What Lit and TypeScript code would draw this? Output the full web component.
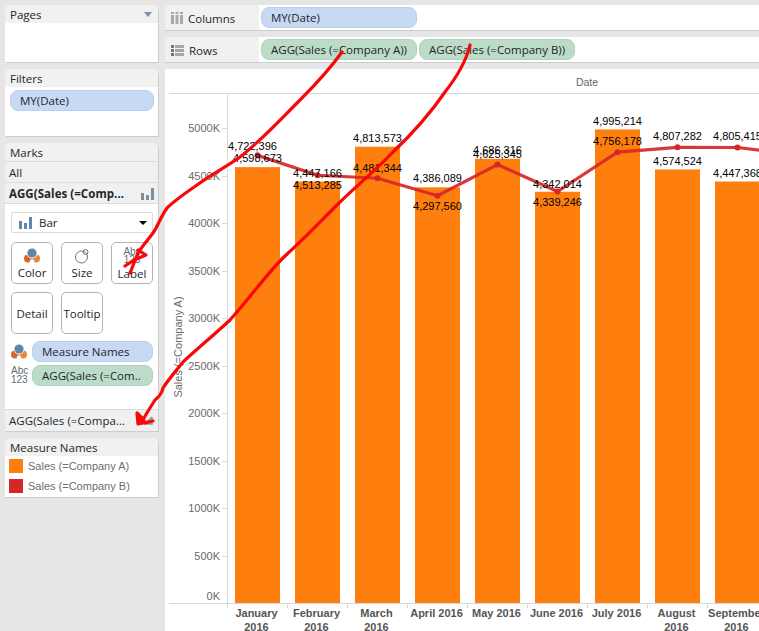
import { LitElement, html, css, svg } from "lit";
import { customElement } from "lit/decorators.js";

const BASE = 604;
const y = (v: number) => BASE - v * 0.000095;
const months = [
  { l: ["January", "2016"], bar: 4598673, line: 4722396, bb: 162, lb: 149.5, dx: -5 },
  { l: ["February", "2016"], bar: 4447166, line: 4513285, bb: 177, lb: 189, dx: 0 },
  { l: ["March", "2016"], bar: 4813573, line: 4481344, bb: 142, lb: 171.5, dx: 0 },
  { l: ["April 2016"], bar: 4386089, line: 4297560, bb: 182, lb: 209.5, dx: 0 },
  { l: ["May 2016"], bar: 4686316, line: 4625345, bb: 153.5, lb: 158, dx: 0 },
  { l: ["June 2016"], bar: 4339246, line: 4342014, bb: 206, lb: 187.5, dx: 0 },
  { l: ["July 2016"], bar: 4995214, line: 4756178, bb: 125, lb: 145, dx: 0 },
  { l: ["August", "2016"], bar: 4574524, line: 4807282, bb: 165, lb: 140, dx: 0 },
  { l: ["September", "2016"], bar: 4447368, line: 4805415, bb: 177, lb: 140, dx: 0 },
];
const fmt = (n: number) => n.toLocaleString("en-US");
const cx = (i: number) => 257.5 + i * 60;
const ticks = [5000, 4500, 4000, 3500, 3000, 2500, 2000, 1500, 1000, 500, 0];

const colorIcon = svg`<svg class="ic" width="16" height="16" viewBox="0 0 16 16"><circle cx="4" cy="10.5" r="4" fill="#d9642a"/><circle cx="12" cy="10.5" r="4" fill="#e8873a"/><circle cx="8" cy="13.5" r="2.2" fill="#fff"/><circle cx="8" cy="5" r="5.4" fill="#fff"/><circle cx="8" cy="5" r="4.6" fill="#5d88ab"/></svg>`;

@customElement("app-root")
export class AppRoot extends LitElement {
  static styles = css`
    :host { display: block; width: 759px; height: 631px; position: relative; overflow: hidden; background: #e6e6e6; font-family: "Open Sans", "Noto Sans", sans-serif; font-size: 11.5px; color: #22262b; }
    .root { display: grid; grid-template-columns: 153px 1fr; column-gap: 7px; padding: 5px 0 0 5px; height: 626px; }
    .left { display: flex; flex-direction: column; gap: 7px; }
    .right { display: flex; flex-direction: column; gap: 7px; min-width: 0; }
    .card { background: #fff; border-radius: 6px 6px 0 0; box-shadow: 1px 1px 0 #cdcdcd; display: flex; flex-direction: column; overflow: hidden; }
    .hd { height: 18px; box-sizing: border-box; padding: 1px 5px 0; background: #f1f1f0; display: flex; align-items: center; justify-content: space-between; flex: none; line-height: 17px; }
    .tri { width: 0; height: 0; border-left: 4px solid transparent; border-right: 4px solid transparent; border-top: 5px solid #7d93ad; margin-right: 1px; }
    .pages { height: 57px; }
    .filters { height: 67px; }
    .pill { height: 21px; box-sizing: border-box; border-radius: 8px; padding-left: 9px; display: flex; align-items: center; line-height: 18px; white-space: nowrap; overflow: hidden; }
    .blue { background: #c7d9f3; border: 1px solid #b9cfee; }
    .green { background: #bcdcc9; border: 1px solid #afd3bd; }
    .fpill { margin: 3px 4px 0 5px; }
    .marks { height: 288px; }
    .row { height: 20px; background: #f0f0f1; border-top: 1px solid #dcdcdc; display: flex; align-items: center; justify-content: space-between; padding: 0 3px 0 4px; flex: none; white-space: nowrap; }
    .row.b { font-weight: 700; letter-spacing: 0.05px; }
    .body { flex: 1; padding: 8px 5px 0 6px; display: flex; flex-direction: column; border-top: 1px solid #dcdcdc; }
    .sel { height: 21px; box-sizing: border-box; border: 1px solid #dcdcdc; border-radius: 2px; display: flex; align-items: center; padding: 0 5px 0 7px; gap: 7px; }
    .sel .caret { margin-left: auto; width: 0; height: 0; border-left: 4px solid transparent; border-right: 4px solid transparent; border-top: 4px solid #000; }
    .btns { display: grid; grid-template-columns: repeat(3, 42px); grid-auto-rows: 42px; gap: 8px; margin-top: 9px; }
    .btn { box-sizing: border-box; border: 1px solid #b4b4b4; border-radius: 5px; display: flex; flex-direction: column; align-items: center; justify-content: center; line-height: 15px; }
    .btn .ic { margin-top: 2px; margin-bottom: 1px; }
    .abc { font-family: "Liberation Sans", sans-serif; font-size: 10px; line-height: 8.5px; color: #5f6b78; text-align: center; height: 17px; margin-top: 2px; margin-bottom: 1px; }
    .enc { display: grid; grid-template-columns: 16px 1fr; column-gap: 5px; row-gap: 3px; margin-top: 7px; align-items: center; }
    .enc .abc { margin: 0; }
    .foot { height: 21px; background: #f0f0f1; border-top: 1px solid #dcdcdc; display: flex; align-items: center; justify-content: space-between; padding: 0 5px 0 4px; flex: none; white-space: nowrap; letter-spacing: 0.05px; }
    .legend { height: 59px; }
    .li { display: flex; align-items: center; gap: 5px; height: 20px; padding-left: 4px; font-family: "Liberation Sans", sans-serif; font-size: 11px; color: #6e6e6e; }
    .li:first-of-type { margin-top: -1px; }
    .sw { width: 14px; height: 14px; flex: none; }
    .shelf { height: 25px; background: #fff; border-radius: 6px 0 0 0; box-shadow: 0 1px 0 #cdcdcd; display: flex; align-items: center; overflow: hidden; flex: none; }
    .shelf .name { width: 94px; height: 100%; background: #f1f1f0; display: flex; align-items: center; gap: 5px; padding: 1px 0 0 6px; box-sizing: border-box; flex: none; margin-right: 2px; }
    .shelf .pill { width: 156px; flex: none; margin-right: 2px; }
    .chart { flex: 1; background: #fff; margin-bottom: -5px; overflow: hidden; }
    .chart svg { display: block; }
    text { font-family: "Liberation Sans", sans-serif; font-size: 11px; }
    .tick { fill: #6a6a6a; text-anchor: end; }
    .val { fill: #000; text-anchor: middle; }
    .xl { fill: #555; font-weight: 700; text-anchor: middle; }
    .ttl { fill: #666; text-anchor: middle; font-size: 10.5px; }
    .overlay { position: absolute; left: 0; top: 0; pointer-events: none; }
  `;

  private chart() {
    const ox = 165, oy = 69;
    const pts = months.map((m, i) => `${cx(i)},${y(m.line)}`).join(" ");
    return svg`<svg width="594" height="562" viewBox="${ox} ${oy} 594 562">
      <line x1="169" x2="759" y1="93.5" y2="93.5" stroke="#d9d9d9"/>
      <line x1="169" x2="759" y1="603.5" y2="603.5" stroke="#d9d9d9"/>
      <line x1="227.5" x2="227.5" y1="93" y2="608" stroke="#d9d9d9"/>
      ${months.map((_, i) => svg`<line x1="${227.5 + (i + 1) * 60}" x2="${227.5 + (i + 1) * 60}" y1="604" y2="608" stroke="#d9d9d9"/>`)}
      ${ticks.map((t) => {
        const ty = Math.round(BASE - t * 0.095) - 0.5;
        return svg`<line x1="222" x2="227" y1="${ty}" y2="${ty}" stroke="#d9d9d9"/><text class="tick" x="220" y="${t === 0 ? ty - 4 : ty + 3}">${t}K</text>`;
      })}
      <text class="ttl" x="587" y="86">Date</text>
      <text class="tick" style="text-anchor:middle" transform="translate(182 347) rotate(-90)">Sales (=Company A)</text>
      ${months.map((m, i) => svg`<rect x="${cx(i) - 22.5}" y="${y(m.bar)}" width="45" height="${BASE - y(m.bar) - 1}" fill="#ff7f0e"/>`)}
      <polyline points="${pts} 797,155" fill="none" stroke="#d62728" stroke-opacity="0.92" stroke-width="3.2" stroke-linejoin="round"/>
      ${months.map((m, i) => svg`<circle cx="${cx(i)}" cy="${y(m.line)}" r="3" fill="#d62728"/>`)}
      ${months.map((m, i) => svg`<text class="val" x="${cx(i)}" y="${m.bb}">${fmt(m.bar)}</text><text class="val" x="${cx(i) + m.dx}" y="${m.lb}">${fmt(m.line)}</text>`)}
      ${months.map((m, i) => m.l.map((s, j) => svg`<text class="xl" x="${cx(i) - 1}" y="${617 + j * 14}">${s}</text>`))}
    </svg>`;
  }

  render() {
    return html`
      <div class="root">
        <div class="left">
          <div class="card pages"><div class="hd">Pages<span class="tri"></span></div></div>
          <div class="card filters"><div class="hd">Filters</div><div class="pill blue fpill">MY(Date)</div></div>
          <div class="card marks">
            <div class="hd">Marks</div>
            <div class="row">All</div>
            <div class="row b">AGG(Sales (=Comp...
              <svg width="14" height="13" viewBox="0 0 14 13" fill="#7d8e9e"><rect x="0" y="6" width="3" height="7"/><rect x="5" y="8" width="3" height="5"/><rect x="10" y="1" width="3" height="12"/></svg>
            </div>
            <div class="body">
              <div class="sel">
                <svg width="13" height="13" viewBox="0 0 13 13" fill="#5d88ab"><rect x="0" y="5" width="3" height="8"/><rect x="5" y="7" width="3" height="6"/><rect x="10" y="1" width="3" height="12"/></svg>
                Bar<span class="caret"></span>
              </div>
              <div class="btns">
                <div class="btn">${colorIcon}Color</div>
                <div class="btn"><svg class="ic" width="16" height="16" viewBox="0 0 16 16" fill="none" stroke="#6b7680"><circle cx="7.5" cy="9" r="6"/><circle cx="11.5" cy="4" r="2.5"/></svg>Size</div>
                <div class="btn"><div class="abc">Abc<br/>123</div>Label</div>
                <div class="btn">Detail</div>
                <div class="btn">Tooltip</div>
              </div>
              <div class="enc">
                ${colorIcon}<div class="pill blue">Measure Names</div>
                <div class="abc">Abc<br/>123</div><div class="pill green">AGG(Sales (=Com..</div>
              </div>
            </div>
            <div class="foot">AGG(Sales (=Compa...
              <svg width="9" height="9" viewBox="0 0 9 9" fill="none" stroke="#8596a8" stroke-width="1.5"><path d="M8 1 L1 8 M8 1 L8 8 L1 8"/></svg>
            </div>
          </div>
          <div class="card legend">
            <div class="hd">Measure Names</div>
            <div class="li"><span class="sw" style="background:#ff7f0e"></span>Sales (=Company A)</div>
            <div class="li"><span class="sw" style="background:#d62728"></span>Sales (=Company B)</div>
          </div>
        </div>
        <div class="right">
          <div class="shelf">
            <div class="name">
              <svg width="12" height="12" viewBox="0 0 12 12" fill="#a3a9b0"><rect x="0" y="0" width="3" height="2"/><rect x="4.5" y="0" width="3" height="2"/><rect x="9" y="0" width="3" height="2"/><rect x="0" y="3" width="3" height="9"/><rect x="4.5" y="3" width="3" height="9"/><rect x="9" y="3" width="3" height="9"/></svg>
              Columns
            </div>
            <div class="pill blue">MY(Date)</div>
          </div>
          <div class="shelf">
            <div class="name">
              <svg width="13" height="11" viewBox="0 0 13 11" fill="#a3a9b0"><rect x="0" y="0" width="3" height="3" fill="#6b7680"/><rect x="0" y="4" width="3" height="3" fill="#6b7680"/><rect x="0" y="8" width="3" height="3" fill="#6b7680"/><rect x="4" y="0" width="9" height="3"/><rect x="4" y="4" width="9" height="3"/><rect x="4" y="8" width="9" height="3"/></svg>
              Rows
            </div>
            <div class="pill green">AGG(Sales (=Company A))</div>
            <div class="pill green">AGG(Sales (=Company B))</div>
          </div>
          <div class="chart">${this.chart()}</div>
        </div>
      </div>
      <svg class="overlay" width="759" height="631" viewBox="0 0 759 631" fill="none" stroke="#f80808" stroke-width="3.2" stroke-linecap="round" stroke-linejoin="round">
        <path d="M342 52 C332 66 316 84 300 100 C280 120 262 140 240 157 C226 167 212 174 197 185 C184 194 174 201 167 208 C160 218 158 226 153 233 C147 241 141 248 138 253 C135 260 133 266 130 273"/>
        <path d="M138 250 L146 255 L134 260 L125 266"/>
        <path d="M470 45 C466 62 456 78 445 92 C430 114 412 134 392 153 C375 171 355 187 335 207 C320 222 305 238 285 256 C268 272 250 298 230 320 C214 335 198 348 183 362 C175 372 168 380 163 388 C162 393 160 396 155 400 C150 408 146 414 143 420"/>
        <path d="M137 413 L145 423 L153 421 L138 424 L137 413 L143 419 L145 423" fill="#f80808"/>
      </svg>
    `;
  }
}
